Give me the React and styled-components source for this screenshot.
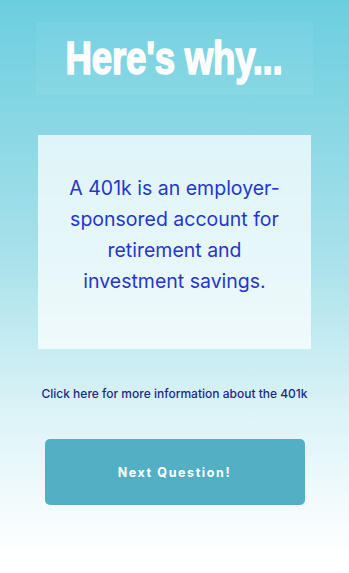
import React from "react";
import styled, { createGlobalStyle } from "styled-components";

const Global = createGlobalStyle`
  html, body { margin: 0; padding: 0; }
  body { font-family: "Inter", "Roboto", sans-serif; }
`;

const Page = styled.div`
  width: 349px;
  height: 573px;
  box-sizing: border-box;
  background: linear-gradient(to bottom, #6bcedf 0%, #a9e1ea 45%, #dcf3f7 72%, #ffffff 97%);
  display: flex;
  flex-direction: column;
  align-items: center;
  padding-top: 22px;
`;

const TitleBox = styled.div`
  width: 277px;
  height: 73px;
  box-sizing: border-box;
  margin-left: -1px;
  background: rgba(255, 255, 255, 0.05);
  display: flex;
  align-items: center;
  justify-content: center;
`;

const Title = styled.h1`
  margin: 0;
  white-space: nowrap;
  font-family: "Liberation Sans", Arial, sans-serif;
  font-weight: 700;
  font-size: 47px;
  letter-spacing: -0.3px;
  color: #ffffff;
  line-height: 1;
  transform: scaleX(0.78);
  -webkit-text-stroke: 1.6px #ffffff;
  padding-bottom: 2px;
`;

const InfoBox = styled.div`
  margin-top: 40px;
  width: 273px;
  height: 214px;
  box-sizing: border-box;
  background: rgba(255, 255, 255, 0.72);
  display: flex;
  align-items: center;
  justify-content: center;
  padding: 0 22px 15px;
`;

const InfoText = styled.p`
  margin: 0;
  text-align: center;
  font-family: "Inter", "Roboto", sans-serif;
  font-size: 19.5px;
  line-height: 31px;
  font-weight: 400;
  color: #2636cc;
`;

const Link = styled.a`
  margin-top: 37px;
  font-family: "Inter", "Roboto", sans-serif;
  font-size: 12px;
  font-weight: 500;
  color: #1c2a86;
  text-decoration: none;
  cursor: pointer;
`;

const NextButton = styled.button`
  margin-top: 38px;
  width: 260px;
  height: 66px;
  border: none;
  border-radius: 5px;
  background: #52afc4;
  color: #ffffff;
  font-family: "Inter", "Roboto", sans-serif;
  font-weight: 700;
  font-size: 12.5px;
  letter-spacing: 1.6px;
  cursor: pointer;
`;

export default function App() {
  return (
    <>
      <Global />
      <Page>
        <TitleBox>
          <Title>Here's why...</Title>
        </TitleBox>
        <InfoBox>
          <InfoText>
            A 401k is an employer-sponsored account for retirement and investment savings.
          </InfoText>
        </InfoBox>
        <Link>Click here for more information about the 401k</Link>
        <NextButton>Next Question!</NextButton>
      </Page>
    </>
  );
}
